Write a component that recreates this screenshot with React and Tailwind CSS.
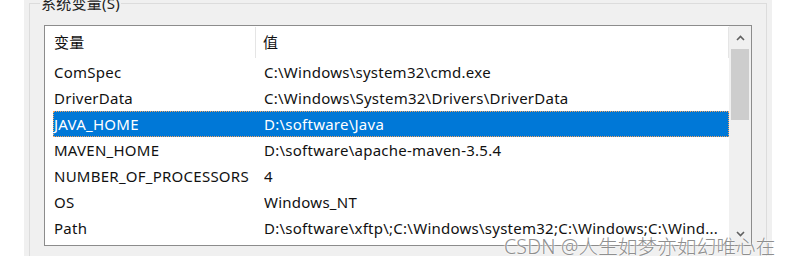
import React from 'react';

const rows = [
  { name: 'ComSpec', value: 'C:\\Windows\\system32\\cmd.exe' },
  { name: 'DriverData', value: 'C:\\Windows\\System32\\Drivers\\DriverData' },
  { name: 'JAVA_HOME', value: 'D:\\software\\Java', selected: true },
  { name: 'MAVEN_HOME', value: 'D:\\software\\apache-maven-3.5.4' },
  { name: 'NUMBER_OF_PROCESSORS', value: '4' },
  { name: 'OS', value: 'Windows_NT' },
  { name: 'Path', value: 'D:\\software\\xftp\\;C:\\Windows\\system32;C:\\Windows;C:\\Wind...' },
];

const font = { fontFamily: '"Noto Sans", "Noto Sans CJK SC", sans-serif' };

export default function App() {
  return (
    <div className="relative w-[792px] h-[270px] bg-white overflow-hidden text-[15px] tracking-[0.25px] text-[#111]" style={font}>
      <div className="ml-6 w-[748px] h-[256px] bg-[#f0f0f0] pt-[3px] px-[5px]">
        {/* group box */}
        <div className="h-full border-l border-r border-t border-[#dcdcdc] relative pl-[14px] pr-[14px] pt-[21px]">
          <div className="absolute left-[10px] -top-[10px] bg-[#f0f0f0] px-[1px] text-[15px] leading-[18px] text-[#222]">
            系统变量(S)
          </div>

          {/* list box */}
          <div className="flex h-[221px] bg-white border border-[#8c8c8c]">
            <div className="flex-1 pl-2 pt-[1px]">
              <div className="flex h-[31px] items-center">
                <div className="w-[203px] pl-[1px] border-r border-[#e5e5e5] h-full flex items-center">变量</div>
                <div className="flex-1 pl-[7px] border-r border-[#e5e5e5] h-full flex items-center">值</div>
              </div>
              <div className="pt-[1px]">
                {rows.map(r => (
                  <div
                    key={r.name}
                    className={
                      r.selected
                        ? 'flex h-[26px] items-center bg-[#0078d7] text-white border border-dotted border-[#f4a460]'
                        : 'flex h-[26px] items-center border border-transparent'
                    }
                  >
                    <div className="w-[210px] whitespace-nowrap">{r.name}</div>
                    <div className="flex-1 whitespace-nowrap overflow-hidden">{r.value}</div>
                  </div>
                ))}
              </div>
            </div>

            {/* scrollbar */}
            <div className="w-[22px] bg-[#f0f0f0] flex flex-col items-center">
              <div className="h-[23px] w-full flex items-center justify-center">
                <svg width="9" height="6" viewBox="0 0 9 6">
                  <path d="M1 5 L4.5 1.5 L8 5" fill="none" stroke="#606060" strokeWidth="1.6" />
                </svg>
              </div>
              <div className="w-[18px] h-[71px] bg-[#cdcdcd]" />
              <div className="flex-1" />
              <div className="h-[23px] w-full flex items-center justify-center">
                <svg width="9" height="6" viewBox="0 0 9 6">
                  <path d="M1 1 L4.5 4.5 L8 1" fill="none" stroke="#606060" strokeWidth="1.6" />
                </svg>
              </div>
            </div>
          </div>
        </div>
      </div>

      {/* watermark */}
      <div
        className="absolute left-[504px] top-[236px] text-[19.5px] leading-[22px] tracking-[0.2px] text-[#8f8f8f] whitespace-nowrap font-light"
        style={{ textShadow: '0 0 2px #fff, 0 0 2px #fff' }}
      >
        CSDN @人生如梦亦如幻唯心在
      </div>
    </div>
  );
}
